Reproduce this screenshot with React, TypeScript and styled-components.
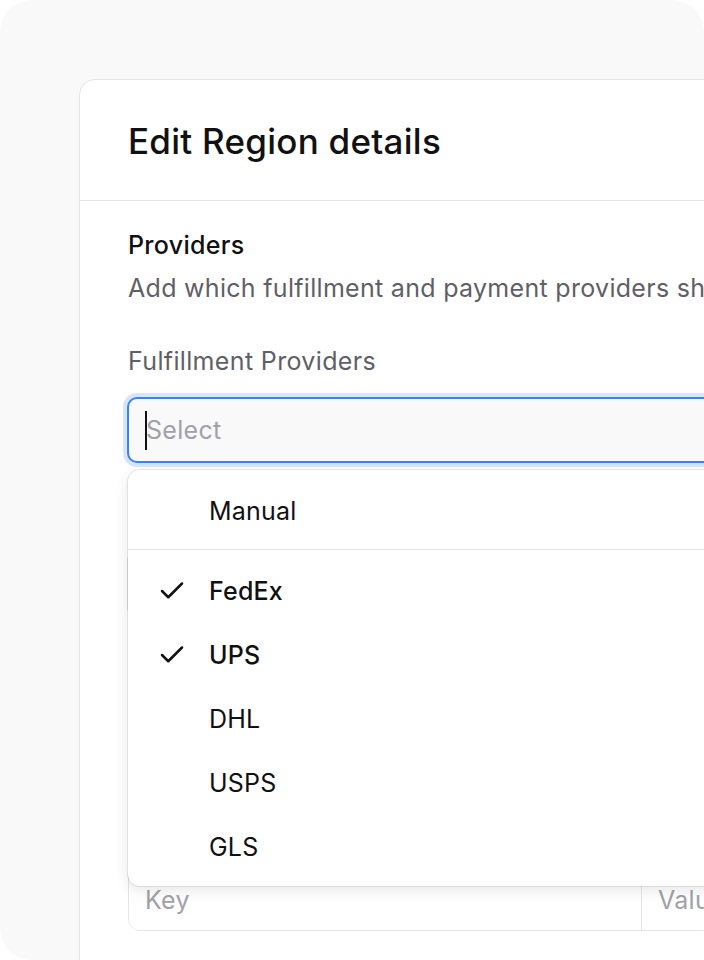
import React from 'react'
import styled, { createGlobalStyle } from 'styled-components'
import { Check } from 'lucide-react'

const GlobalStyle = createGlobalStyle`
    html, body {
        margin: 0;
        padding: 0;
        background: #ffffff;
    }
    body {
        font-family: Inter, "Noto Sans", "Liberation Sans", sans-serif;
        -webkit-font-smoothing: antialiased;
    }
`

type Provider = { name: string, selected: boolean }

const shippingProviders: Provider[] = [
    { name: 'FedEx', selected: true },
    { name: 'UPS', selected: true },
    { name: 'DHL', selected: false },
    { name: 'USPS', selected: false },
    { name: 'GLS', selected: false },
]

const App: React.FC = () => {
    return (
        <>
            <GlobalStyle />
            <Canvas>
                <Modal>
                    <ModalHeader>
                        <ModalTitle>Edit Region details</ModalTitle>
                    </ModalHeader>
                    <ModalBody>
                        <SectionTitle>Providers</SectionTitle>
                        <SectionText>Add which fulfillment and payment providers should be available in this region.</SectionText>

                        <Field $gapTop={41}>
                            <FieldLabel>Fulfillment Providers</FieldLabel>
                            <SelectWrap>
                                <SelectBox $focused>
                                    <Caret />
                                    <Placeholder>Select</Placeholder>
                                </SelectBox>

                                {/* opened options list */}
                                <Menu>
                                    <MenuGroup>
                                        <MenuItem $selected={false}>
                                            <CheckSlot />
                                            <span>Manual</span>
                                        </MenuItem>
                                    </MenuGroup>
                                    <MenuDivider />
                                    <MenuGroup>
                                        {shippingProviders.map((p) => (
                                            <MenuItem key={p.name} $selected={p.selected}>
                                                <CheckSlot>
                                                    {p.selected && <Check size={30} strokeWidth={2} />}
                                                </CheckSlot>
                                                <span>{p.name}</span>
                                            </MenuItem>
                                        ))}
                                    </MenuGroup>
                                </Menu>
                            </SelectWrap>
                        </Field>

                        <Field $gapTop={36}>
                            <FieldLabel>Payment Providers</FieldLabel>
                            <SelectBox $focused={false}>
                                <Placeholder>Select</Placeholder>
                            </SelectBox>
                        </Field>

                        <MetaSection>
                            <SectionTitle>Metadata</SectionTitle>
                            <SectionText>Add metadata to this region.</SectionText>
                            <MetaTable>
                                <MetaRow>
                                    <MetaCell $head>Key</MetaCell>
                                    <MetaCell $head>Value</MetaCell>
                                </MetaRow>
                                <MetaRow>
                                    <MetaCell>Key</MetaCell>
                                    <MetaCell>Value</MetaCell>
                                </MetaRow>
                            </MetaTable>
                        </MetaSection>
                    </ModalBody>
                </Modal>
            </Canvas>
        </>
    )
}

export default App

const Canvas = styled.div`
    width: 704px;
    height: 960px;
    background: #f9f9f9;
    border-radius: 32px;
    overflow: hidden;
    padding: 79px 0 0 79px;
    box-sizing: border-box;
`

const Modal = styled.div`
    width: 760px;
    min-height: 960px;
    background: #ffffff;
    border: 1px solid #e4e4e7;
    border-radius: 16px;
    box-sizing: border-box;
`

const ModalHeader = styled.div`
    height: 121px;
    box-sizing: border-box;
    display: flex;
    align-items: center;
    padding: 2px 48px 0 48px;
    border-bottom: 1px solid #e4e4e7;
`

const ModalTitle = styled.h1`
    margin: 0;
    font-size: 35px;
    line-height: 42px;
    font-weight: 500;
    color: #111113;
    letter-spacing: 0.25px;
`

const ModalBody = styled.div`
    padding: 28px 48px 0 48px;
`

const SectionTitle = styled.h2`
    margin: 0;
    font-size: 25px;
    line-height: 32px;
    font-weight: 500;
    color: #111113;
    letter-spacing: 0.3px;
`

const SectionText = styled.p`
    margin: 11px 0 0 0;
    font-size: 25px;
    line-height: 32px;
    font-weight: 400;
    color: #5f5f67;
    letter-spacing: 0.3px;
    white-space: nowrap;
`

const Field = styled.div<{ $gapTop: number }>`
    margin-top: ${p => p.$gapTop}px;
    display: flex;
    flex-direction: column;
    gap: 20px;
`

const FieldLabel = styled.label`
    font-size: 25px;
    line-height: 32px;
    color: #5f5f67;
    letter-spacing: 0.35px;
`

const SelectWrap = styled.div`
    position: relative;
`

const SelectBox = styled.div<{ $focused: boolean }>`
    height: 66px;
    box-sizing: border-box;
    display: flex;
    align-items: center;
    padding: 0 16px;
    background: #f9f9fa;
    border-radius: 10px;
    border: ${p => p.$focused ? '2px solid #3b82f6' : '1px solid #e4e4e7'};
    box-shadow: ${p => p.$focused ? '0 0 0 4px #d7e5fc' : 'none'};
    margin-left: -1px;
`

const Caret = styled.span`
    width: 2px;
    height: 39px;
    background: #111113;
    margin-right: -1px;
`

const Placeholder = styled.span`
    font-size: 25px;
    color: #a1a1aa;
    letter-spacing: 0.3px;
`

const Menu = styled.div`
    position: absolute;
    top: 73px;
    left: 0;
    width: 720px;
    background: #ffffff;
    border-radius: 12px;
    box-shadow: 0 0 0 1px rgba(0, 0, 0, 0.08), 0 4px 14px rgba(0, 0, 0, 0.1);
    z-index: 5;
`

const MenuGroup = styled.div`
    padding: 9px 0 7px 0;
`

const MenuDivider = styled.div`
    height: 1px;
    background: #e4e4e7;
    margin-top: -1px;
`

const MenuItem = styled.div<{ $selected: boolean }>`
    height: 64px;
    display: grid;
    grid-template-columns: 30px 1fr;
    align-items: center;
    column-gap: 22px;
    padding-left: 29px;
    font-size: 25px;
    letter-spacing: 0.2px;
    font-weight: ${p => p.$selected ? 500 : 400};
    color: #111113;
`

const CheckSlot = styled.span`
    display: flex;
    align-items: center;
    justify-content: center;
    color: #111113;
`

const MetaSection = styled.div`
    margin-top: 56px;
`

const MetaTable = styled.div`
    margin-top: 60px;
    border: 1px solid #e4e4e7;
    border-radius: 12px;
    overflow: hidden;
`

const MetaRow = styled.div`
    display: grid;
    grid-template-columns: 512px 1fr;
    & + & {
        border-top: 1px solid #e4e4e7;
    }
`

const MetaCell = styled.div<{ $head?: boolean }>`
    height: 60px;
    display: flex;
    align-items: center;
    padding: 0 16px;
    font-size: 25px;
    letter-spacing: 0.3px;
    color: #a1a1aa;
    background: ${p => p.$head ? '#f9f9fa' : '#ffffff'};
    & + & {
        border-left: 1px solid #e4e4e7;
    }
`
